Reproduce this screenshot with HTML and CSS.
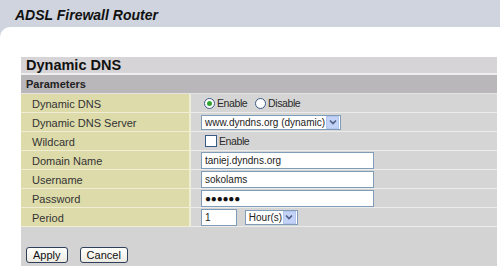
FILE: index.html
```html
<!DOCTYPE html>
<html lang="en">

<head>
    <meta charset="UTF-8">
    <title>ADSL Firewall Router</title>
    <link rel="stylesheet" href="styles.css">
</head>

<body>
    <header class="top-bar">
        <div class="brand">ADSL Firewall Router</div>
    </header>

    <div class="page">
        <div class="panel">
            <div class="panel-title">Dynamic DNS</div>
            <div class="section-head">Parameters</div>

            <table class="form-table">
                <tr>
                    <td class="label">Dynamic DNS</td>
                    <td class="value">
                        <span class="radio checked"></span><span class="opt">Enable</span>
                        <span class="radio"></span><span class="opt">Disable</span>
                    </td>
                </tr>
                <tr>
                    <td class="label">Dynamic DNS Server</td>
                    <td class="value">
                        <div class="select server">
                            <span class="select-text">www.dyndns.org (dynamic)</span>
                            <span class="select-arrow"><svg width="8" height="6" viewBox="0 0 8 6"><path d="M1 1.5 L4 4.5 L7 1.5" fill="none" stroke="#4d6185" stroke-width="1.7"/></svg></span>
                        </div>
                    </td>
                </tr>
                <tr>
                    <td class="label">Wildcard</td>
                    <td class="value">
                        <span class="checkbox"></span><span class="opt">Enable</span>
                    </td>
                </tr>
                <tr>
                    <td class="label">Domain Name</td>
                    <td class="value"><input class="text-input" type="text" value="taniej.dyndns.org"></td>
                </tr>
                <tr>
                    <td class="label">Username</td>
                    <td class="value"><input class="text-input" type="text" value="sokolams"></td>
                </tr>
                <tr>
                    <td class="label">Password</td>
                    <td class="value"><input class="text-input pass" type="text" value="●●●●●●"></td>
                </tr>
                <tr>
                    <td class="label">Period</td>
                    <td class="value">
                        <input class="text-input short" type="text" value="1">
                        <div class="select unit">
                            <span class="select-text">Hour(s)</span>
                            <span class="select-arrow"><svg width="8" height="6" viewBox="0 0 8 6"><path d="M1 1.5 L4 4.5 L7 1.5" fill="none" stroke="#4d6185" stroke-width="1.7"/></svg></span>
                        </div>
                    </td>
                </tr>
            </table>

            <div class="actions">
                <button class="btn">Apply</button>
                <button class="btn">Cancel</button>
            </div>
        </div>
    </div>
</body>

</html>
```

FILE: styles.css
```css
body {
    font-family: 'Liberation Sans', Arial, sans-serif;
    margin: 0;
    padding: 0;
    background-color: #cfd4de;
    color: #2a2a2a;
    font-size: 11px;
}

/* Header */
.top-bar {
    height: 27px;
    background-color: #cfd4de;
    padding-left: 15px;
    box-sizing: border-box;
}

.brand {
    font-size: 14px;
    font-weight: bold;
    font-style: italic;
    color: #111;
    line-height: 27px;
    padding-top: 2px;
}

.page {
    background-color: #fff;
    border-top-left-radius: 10px;
    height: 242px;
    padding: 30px 3px 0 21px;
    box-sizing: border-box;
}

/* Panel */
.panel {
    background-color: #d4d3d4;
    height: 209px;
}

.panel-title {
    height: 16px;
    line-height: 17px;
    background-color: #d6d4d6;
    font-size: 14.5px;
    font-weight: bold;
    color: #111;
    padding-left: 5px;
    border-bottom: 2px solid #eeeeee;
}

.section-head {
    height: 18px;
    line-height: 19px;
    background-color: #b9b7b9;
    font-weight: bold;
    color: #222;
    padding-left: 5px;
    border-bottom: 1px solid #e3e3e3;
}

.form-table {
    width: 100%;
    border-spacing: 0;
}

.form-table td {
    height: 18px;
    padding: 0;
    border-bottom: 1px solid #ececec;
}

.label {
    width: 157px;
    padding: 1px 0 0 11px !important;
    height: 17px !important;
    background-color: #dddbaa;
    border-right: 2px solid #eeedd6;
    border-bottom-color: #efeed4 !important;
    color: #333;
}

.value {
    background-color: #d5d5d5;
    padding-left: 10px !important;
    white-space: nowrap;
    font-size: 10px;
}

/* Radios and checkbox */
.radio {
    display: inline-block;
    width: 9px;
    height: 9px;
    border: 1px solid #3a5a86;
    border-radius: 50%;
    background-color: #fff;
    vertical-align: -2px;
    margin-left: 3px;
    position: relative;
}

.radio + .opt + .radio {
    margin-left: 2px;
}

.radio.checked::after {
    content: "";
    position: absolute;
    left: 2px;
    top: 2px;
    width: 5px;
    height: 5px;
    border-radius: 50%;
    background-color: #2fa52f;
}

.checkbox {
    display: inline-block;
    width: 10px;
    height: 10px;
    border: 1px solid #3a5a86;
    background-color: #fff;
    vertical-align: -2px;
    margin-left: 4px;
}

.opt {
    margin-left: 2px;
    margin-right: 3px;
    font-size: 10.5px;
    letter-spacing: -0.4px;
}

/* Inputs */
.text-input {
    width: 173px;
    height: 17px;
    box-sizing: border-box;
    border: 1px solid #7f9db9;
    padding: 0 3px;
    font-family: 'Liberation Sans', Arial, sans-serif;
    font-size: 10px;
    color: #222;
    background-color: #fff;
    margin: 0;
    vertical-align: middle;
}

.text-input.pass {
    font-size: 10px;
    letter-spacing: -0.2px;
    color: #111;
}

.text-input.short {
    width: 36px;
}

.select {
    display: inline-flex;
    align-items: center;
    height: 15px;
    box-sizing: border-box;
    border: 1px solid #7f9db9;
    background-color: #fff;
    vertical-align: middle;
    padding-right: 1px;
}

.select.server {
    width: 140px;
}

.select.unit {
    width: 53px;
    margin-left: 5px;
}

.select-text {
    flex: 1;
    padding-left: 3px;
    color: #222;
}

.select-arrow {
    width: 11px;
    height: 11px;
    background-color: #c3d3f7;
    border: 1px solid #b4c6ee;
    display: flex;
    align-items: center;
    justify-content: center;
}

/* Buttons */
.actions {
    padding: 20px 0 0 5px;
}

.btn {
    font-family: 'Liberation Sans', Arial, sans-serif;
    font-size: 11px;
    color: #111;
    height: 16px;
    padding: 0 6px;
    border: 1px solid #2f3f5c;
    border-radius: 3px;
    background: linear-gradient(#ffffff, #eceae0);
    margin-right: 9px;
    line-height: 13px;
}
```
